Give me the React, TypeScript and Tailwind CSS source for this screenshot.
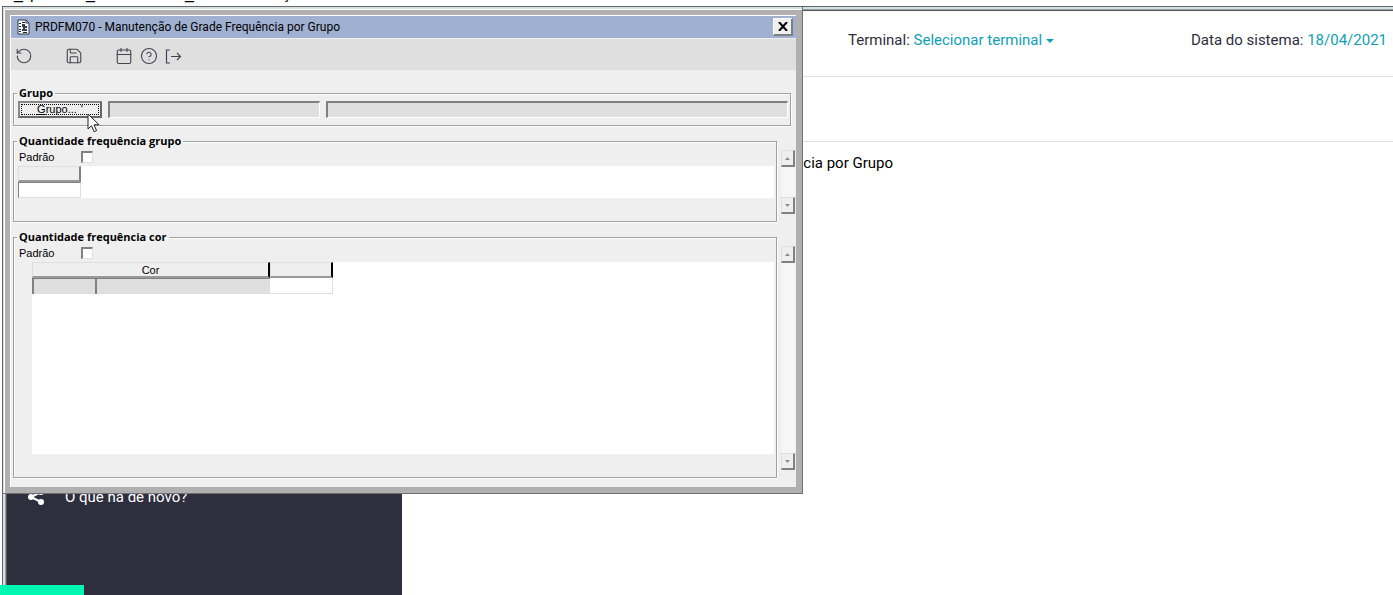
import React from 'react';
import { Calendar, CircleHelp, RotateCcw, Save } from 'lucide-react';

const toolbar = [
  { label: 'Desfazer', icon: 'undo', gap: '' },
  { label: 'Salvar', icon: 'save', gap: 'ml-[25px]' },
  { label: 'Calendário', icon: 'calendar', gap: 'ml-[25px]' },
  { label: 'Ajuda', icon: 'help', gap: '' },
  { label: 'Sair', icon: 'exit', gap: '' },
];

const ToolIcon: React.FC<{ name: string }> = ({ name }) => {
  const props = { size: 18, strokeWidth: 1.5 };
  if (name === 'undo') return <RotateCcw {...props} />;
  if (name === 'save') return <Save {...props} />;
  if (name === 'help') return <CircleHelp {...props} />;
  if (name === 'calendar') return <Calendar {...props} />;
  return (
    <svg width="17" height="15" viewBox="0 0 17 15" fill="none" stroke="currentColor" strokeWidth="1.2">
      <path d="M5 1H1.5v13H5M6 7.5h9.5M12 4l3.5 3.5L12 11" />
    </svg>
  );
};

const Cursor: React.FC = () => (
  <svg width="13" height="20" viewBox="0 0 13 20" className="absolute left-[84px] top-[106px]">
    <path
      d="M1 1v15l3.5-3.3 2.6 6 2.5-1.1-2.6-5.8H12z"
      fill="#fff"
      stroke="#222"
      strokeWidth="1"
    />
  </svg>
);

const ScrollButton: React.FC<{ label: string; up?: boolean }> = ({ label, up }) => (
  <button
    type="button"
    aria-label={label}
    className="flex h-[17px] w-[14px] items-center justify-center border border-b-2 border-r-2 border-[#dfdfdf] border-b-[#808080] border-r-[#808080] bg-[#efefef]"
  >
    <svg width="5" height="3" viewBox="0 0 5 3" fill="#8c8c8c">
      <path d={up ? 'M0 3h5L2.5 0z' : 'M0 0h5L2.5 3z'} />
    </svg>
  </button>
);

const ScrollBar: React.FC<{ name: string }> = ({ name }) => (
  <div className="flex w-[14px] flex-col justify-between bg-[#f6f6f6]">
    <ScrollButton label={`${name}: subir`} up />
    <ScrollButton label={`${name}: descer`} />
  </div>
);

const Group: React.FC<{ title: string; className: string; children: React.ReactNode }> = ({
  title,
  className,
  children,
}) => (
  <fieldset
    className={`min-w-0 border border-[#a0a0a0] shadow-[1px_1px_0_#fff,inset_1px_1px_0_#fff] ${className}`}
  >
    <legend className="ml-[3px] px-0.5 font-['Open_Sans',sans-serif] text-[11px] font-bold leading-4">
      {title}
    </legend>
    {children}
  </fieldset>
);

const DefaultCheck: React.FC<{ id: string }> = ({ id }) => (
  <div className="mb-px flex h-4 items-center pl-[5px]">
    <label htmlFor={id} className="w-[62px] leading-4">
      Padrão
    </label>
    <input
      id={id}
      type="checkbox"
      className="size-3 appearance-none border border-l-2 border-t-2 border-[#dfdfdf] border-l-[#808080] border-t-[#808080] bg-white"
    />
  </div>
);

const headCell =
  'h-4 border border-b-2 border-r-2 border-[#dfdfdf] border-b-[#999] bg-[#efefef] p-0 pt-px text-center font-normal leading-3';
const sunken = 'block h-4 w-full border-l-2 border-t border-[#808080]';

const Dialog: React.FC = () => (
  <div
    role="dialog"
    aria-labelledby="dialog-title"
    className="absolute left-[3px] top-[7px] w-[800px] border-b border-r border-[#707070] bg-[#b0b0b0] pl-0.5 pt-[3px] text-[11px] text-black shadow-[inset_1px_2px_0_#d5e0e4,inset_2px_3px_0_#fff]"
  >
    <div className="mb-[6px] ml-[5px] mr-[6px] mt-[5px] border-l border-t border-white bg-[#efefef]">
      <header className="flex h-[22px] items-center bg-[#a0b0d0] pl-[6px] pr-[3px]">
        <svg width="13" height="16" viewBox="0 0 13 16">
          <path d="M1 1h8l3 3v11H1z" fill="#f4f6f8" stroke="#333f4d" />
          <path d="M9 1v3h3" fill="none" stroke="#333f4d" />
          <path d="M2 4.5h2M5 3.5h3M2 7.5h2M2 10.5h2M2 12.5h2M6 13.5h4" stroke="#222" />
          <path d="M5 5h3v2h2v2H8v1h2v2H5v-2h1V8H5z" fill="#333f4d" />
        </svg>
        <h1 id="dialog-title" className="ml-[5px] flex-1 font-['Roboto',sans-serif] text-[12px]">
          PRDFM070 - Manutenção de Grade Frequência por Grupo
        </h1>
        <button
          type="button"
          aria-label="Fechar"
          className="flex h-[18px] w-5 items-center justify-center border border-b-2 border-r-2 border-white border-b-[#808080] border-r-[#808080] bg-[#efefef]"
        >
          <svg width="10" height="9" viewBox="0 0 10 9" stroke="#000" strokeWidth="2">
            <path d="M1 0l8 9M9 0L1 9" />
          </svg>
        </button>
      </header>

      <div role="toolbar" className="mt-px flex h-[31px] items-center bg-[#dfdfdf] pt-[3px] text-[#45454d]">
        {toolbar.map((item) => (
          <button
            key={item.label}
            type="button"
            aria-label={item.label}
            className={`flex w-[25px] items-center justify-center ${item.gap}`}
          >
            <ToolIcon name={item.icon} />
          </button>
        ))}
      </div>

      <form className="pb-[9px] pl-0.5 pt-[15px]">
        <Group title="Grupo" className="mr-[5px] h-[41px]">
          <div className="flex items-start gap-[6px] pl-1 pr-[2px]">
            <button
              type="button"
              className="h-[17px] w-[84px] border-2 border-[#666] border-l-[#888] border-t-[#888] bg-[#efefef] p-px leading-[9px]"
            >
              <span className="flex justify-center gap-1 border border-dotted border-black">
                <span>
                  <u>G</u>rupo...
                </span>
                <span>'</span>
              </span>
            </button>
            <input
              aria-label="Código do grupo"
              readOnly
              className="h-[17px] w-[212px] border border-l-2 border-t-2 border-white border-l-[#808080] border-t-[#808080] bg-[#dfdfdf]"
            />
            <input
              aria-label="Descrição do grupo"
              readOnly
              className="h-[17px] min-w-0 flex-1 border border-l-2 border-t-2 border-white border-l-[#808080] border-t-[#808080] bg-[#dfdfdf]"
            />
          </div>
        </Group>

        <div className="mt-[7px] flex items-stretch gap-1 pr-px">
          <Group title="Quantidade frequência grupo" className="h-[89px] flex-1">
            <DefaultCheck id="padrao-grupo" />
            <div className="ml-1 mr-[2px] h-8 bg-white">
              <table className="w-[63px] table-fixed border-separate border-spacing-0">
                <thead>
                  <tr>
                    <th className={`${headCell} border-r-[#808080]`} aria-label="Quantidade" />
                  </tr>
                </thead>
                <tbody>
                  <tr>
                    <td className="p-0">
                      <input
                        aria-label="Quantidade do grupo"
                        className="block h-4 w-full border border-[#dfdfdf] border-l-[#808080] border-t-[#808080] bg-white"
                      />
                    </td>
                  </tr>
                </tbody>
              </table>
            </div>
          </Group>
          <div className="flex pb-2 pt-[17px]">
            <ScrollBar name="Grupo" />
          </div>
        </div>

        <div className="mt-[7px] flex items-stretch gap-1 pr-px">
          <Group title="Quantidade frequência cor" className="flex-1 pb-[23px]">
            <DefaultCheck id="padrao-cor" />
            <div className="ml-[18px] mr-[2px] h-48 bg-white">
              <table className="w-[301px] table-fixed border-separate border-spacing-0">
                <colgroup>
                  <col className="w-[63px]" />
                  <col />
                  <col className="w-[63px]" />
                </colgroup>
                <thead>
                  <tr>
                    <th colSpan={2} className={`${headCell} border-r-black`}>
                      Cor
                    </th>
                    <th className={`${headCell} border-r-black`} aria-label="Quantidade" />
                  </tr>
                </thead>
                <tbody>
                  <tr>
                    <td className="p-0">
                      <input aria-label="Código da cor" readOnly className={`${sunken} bg-[#dfdfdf]`} />
                    </td>
                    <td className="p-0">
                      <input aria-label="Descrição da cor" readOnly className={`${sunken} bg-[#dfdfdf]`} />
                    </td>
                    <td className="p-0">
                      <input
                        aria-label="Quantidade da cor"
                        className="block h-4 w-full border-b border-r border-[#dfdfdf] bg-white"
                      />
                    </td>
                  </tr>
                </tbody>
              </table>
            </div>
          </Group>
          <div className="flex pb-2 pt-[17px]">
            <ScrollBar name="Cor" />
          </div>
        </div>
      </form>
    </div>
    <Cursor />
  </div>
);

export default function App() {
  return (
    <div className="relative flex min-h-screen flex-col overflow-hidden bg-white font-['Liberation_Sans',Arial,sans-serif]">
      <div className="flex h-[6px] items-end overflow-hidden pl-3.5 text-base leading-6">
        <span className="w-4">_</span>
        <span className="w-[56px]">p</span>
        <span className="w-[99px]">_</span>
        <span className="w-[97px]">_</span>
        <span>ç</span>
      </div>

      <div className="ml-0.5 flex flex-1 flex-col border-l border-t border-[#666] bg-[#d0dfe8] pl-0.5 pt-0.5">
        <div className="flex flex-1 flex-col border-l border-t border-[#a0a0a0]">
          <div className="flex flex-1 border-l border-t border-[#555] bg-white">
            <aside className="flex w-[395px] shrink-0 flex-col bg-[#2e2e3e] pt-[475px] text-white">
              <a href="#novidades" className="flex items-center pl-5 font-['Roboto',sans-serif] text-[15px]">
                <svg width="18" height="18" viewBox="0 0 18 18" fill="#fff" stroke="#fff" strokeWidth="2">
                  <path d="M14 4L4 9l10 5" fill="none" />
                  <circle cx="14" cy="4" r="2" />
                  <circle cx="4" cy="9" r="2" />
                  <circle cx="14" cy="14" r="2" />
                </svg>
                <span className="ml-5">O que há de novo?</span>
              </a>
            </aside>

            <div className="flex-1 font-['Roboto',sans-serif] text-[15px] text-[#2e2e3e]">
              <header className="flex h-[66px] items-center justify-between border-b border-[#dfdfdf] pb-[6px] pl-[446px] pr-[6px]">
                <p>
                  Terminal:{' '}
                  <button type="button" className="text-[#10a0b4]">
                    Selecionar terminal
                    <svg width="8" height="4" viewBox="0 0 8 4" className="ml-1 inline-block align-middle" fill="currentColor">
                      <path d="M0 0h8L4 4z" />
                    </svg>
                  </button>
                </p>
                <p>
                  Data do sistema:{' '}
                  <a href="#data" className="text-[#10a0b4]">
                    18/04/2021
                  </a>
                </p>
              </header>
              <div className="h-[65px] border-b border-[#dfdfdf]" />
              <h2 className="w-[491px] pt-[10px] text-right text-black">
                PRDFM070 - Manutenção de Grade Frequência por Grupo
              </h2>
            </div>
          </div>
        </div>
      </div>

      <Dialog />
      <div className="absolute bottom-0 left-0 h-[10px] w-[84px] bg-[#00f8b0]" />
    </div>
  );
}
